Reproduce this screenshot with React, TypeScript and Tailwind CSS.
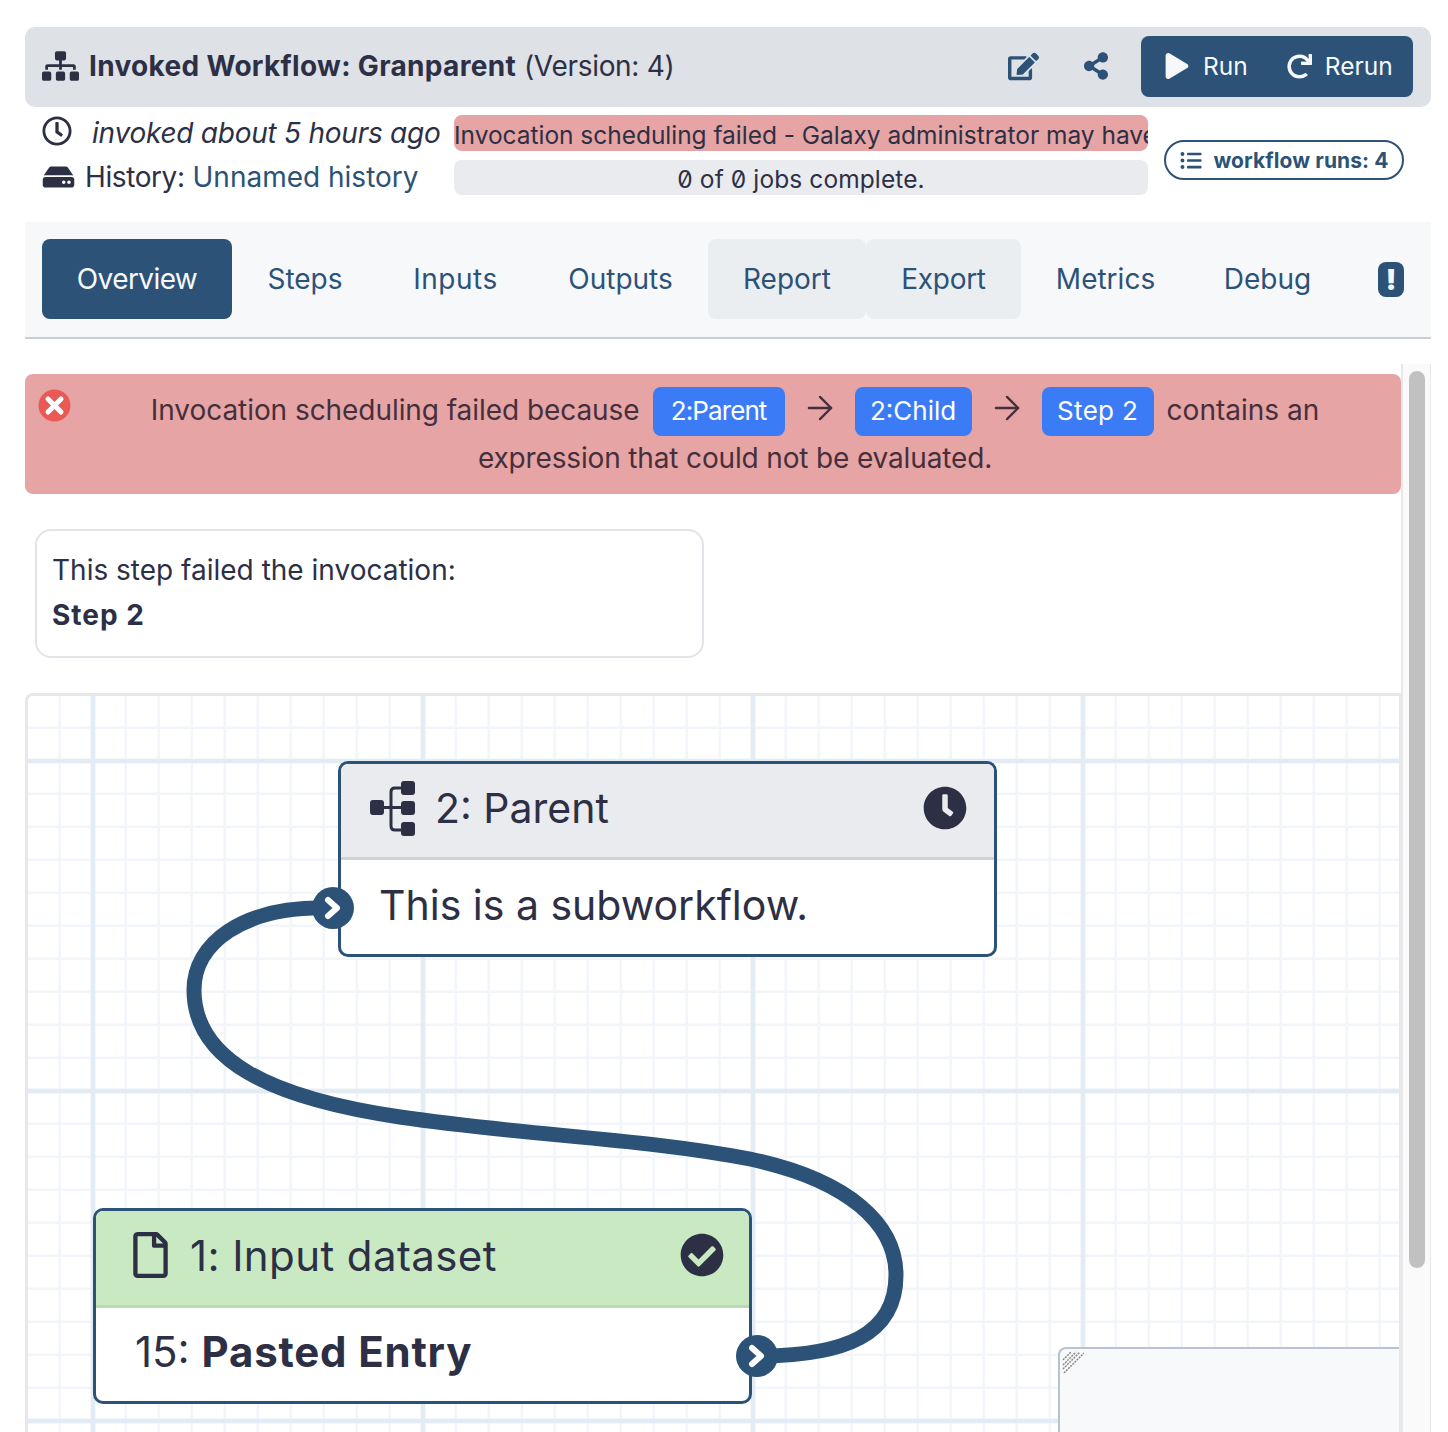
import React from 'react';
import { FaSitemap, FaRegClock, FaHdd, FaEdit, FaShareAlt, FaPlay, FaRedo, FaListUl, FaRegFile, FaClock, FaCheckCircle } from 'react-icons/fa';
import { ArrowRight } from 'lucide-react';

const font = "font-['Inter','Liberation_Sans',sans-serif]";

function Tab({ label, className }: { label: string; className: string }) {
  return <div className={`flex h-20 items-center justify-center rounded-lg text-[#2c5278] ${className}`}>{label}</div>;
}

function Badge({ label, className }: { label: string; className: string }) {
  return <span className={`mx-[13px] inline-flex h-[49px] items-center justify-center rounded-lg bg-[#3b7cf6] text-[26px] text-white ${className}`}>{label}</span>;
}

function Arrow() {
  return <ArrowRight className="mx-[3px] h-[38px] w-[38px] -translate-y-[3px] text-[#462f3c]" strokeWidth={1.5} />;
}

function Terminal({ className }: { className: string }) {
  return (
    <div className={`absolute flex h-[42px] w-[42px] items-center justify-center rounded-full bg-[#2c5278] ${className}`}>
      <svg width="22" height="26" viewBox="0 0 22 26" fill="none" stroke="#fff" strokeWidth="6" strokeLinecap="round" strokeLinejoin="round">
        <path d="M6 5 L15 13 L6 21" />
      </svg>
    </div>
  );
}

function SubworkflowIcon() {
  return (
    <svg width="46" height="56" viewBox="0 0 46 56" fill="#2d3045">
      <rect x="0" y="19" width="14" height="15" rx="3" />
      <rect x="31" y="0" width="14" height="14" rx="3" />
      <rect x="31" y="20" width="14" height="14" rx="3" />
      <rect x="31" y="41" width="14" height="14" rx="3" />
      <path d="M31 7 H25 Q21 7 21 11 V45 Q21 49 25 49 H31 M14 26.5 H31" fill="none" stroke="#2d3045" strokeWidth="3" />
    </svg>
  );
}

export default function App() {
  return (
    <div className={`h-[1432px] w-[1448px] overflow-hidden bg-white pl-[25px] pr-[17px] pt-[27px] text-[28px] text-[#2d3045] slashed-zero ${font}`}>
      {/* Header */}
      <div className="flex h-20 items-center justify-between rounded-[10px] bg-[#dee1e6] pb-[2px] pl-[17px] pr-[18px]">
        <div className="flex items-center gap-[10px]">
          <FaSitemap className="h-[30px] w-[37px]" />
          <span><b className="font-bold tracking-[0.32px]">Invoked Workflow: Granparent</b> <span className="tracking-[-0.3px]">(Version: 4)</span></span>
        </div>
        <div className="flex items-center text-[#2c5278]">
          <FaEdit className="mr-[45px] h-[29px] w-[31px]" />
          <FaShareAlt className="mr-[33px] h-[28px] w-[24px]" />
          <div className="flex h-[61px] w-[272px] items-center rounded-lg bg-[#2c5278] pl-6 text-[24.5px] text-[#f7f8fa]">
            <FaPlay className="mr-[14px] h-[26px] w-[24px]" />
            <span>Run</span>
            <FaRedo className="ml-[39px] mr-[13px] h-[27px] w-[25px]" />
            <span>Rerun</span>
          </div>
        </div>
      </div>

      {/* Meta */}
      <div className="mt-2 flex h-20 pl-[17px]">
        <div className="w-[412px]">
          <div className="flex h-9 items-center">
            <FaRegClock className="mr-[20px] h-[30px] w-[30px] -translate-y-[2px]" />
            <i className="tracking-[-0.25px]">invoked about 5 hours ago</i>
          </div>
          <div className="mt-[8px] flex h-9 items-center">
            <FaHdd className="mr-[10px] h-[28px] w-[33px]" />
            <span><span className="tracking-[-0.4px]">History:</span> <span className="text-[#2c5278]">Unnamed history</span></span>
          </div>
        </div>
        <div className="w-[694px] text-[24.5px]">
          <div className="h-9 overflow-hidden whitespace-nowrap rounded-lg bg-[#e6a4a4] leading-[40px] tracking-[-0.03px]">Invocation scheduling failed - Galaxy administrator may have</div>
          <div className="mt-[9px] flex h-[35px] items-center justify-center rounded-lg bg-[#e9ebef] pt-[3px] tracking-[0.1px]">0 of 0 jobs complete.</div>
        </div>
        <div className="ml-4 mt-[25px] flex h-10 w-[240px] items-center justify-center gap-[10px] rounded-full border-2 border-[#2c5278] pt-[1px] text-[21px] font-bold tracking-[0.1px] text-[#2c5278]">
          <FaListUl className="h-[21px] w-[24px]" />
          <span>workflow runs: 4</span>
        </div>
      </div>

      {/* Tabs */}
      <div className="mt-[27px] flex h-[117px] items-start border-b-2 border-[#c8ced6] bg-[#f7f8fa] pl-[17px] pt-[17px]">
        <div className="flex h-20 w-[190px] items-center justify-center rounded-lg bg-[#2c5278] tracking-[-0.6px] text-[#f7f8fa]">Overview</div>
        <Tab label="Steps" className="w-[146px]" />
        <Tab label="Inputs" className="w-[155px] tracking-[0.5px]" />
        <Tab label="Outputs" className="w-[175px]" />
        <Tab label="Report" className="w-[158px] bg-[#ebeef1]" />
        <Tab label="Export" className="w-[155px] bg-[#ebeef1] tracking-[-0.3px]" />
        <Tab label="Metrics" className="w-[169px]" />
        <Tab label="Debug" className="w-[155px]" />
        <div className="ml-[33px] mt-[23px] flex h-[35px] w-[26px] items-center justify-center rounded-lg bg-[#2c5278] text-[28px] font-black leading-none text-[#f7f8fa]">!</div>
      </div>

      {/* Scroll area */}
      <div className="mt-[25px] flex h-[1068px] overflow-hidden">
        <div className="w-[1376px] shrink-0">
          <div className="relative mt-[10px] h-[120px] rounded-lg bg-[#e6a4a4] pl-[100px] pr-[56px] pt-3 text-center leading-[48px] text-[#462f3c]">
            <svg className="absolute left-[13px] top-[15px] h-[33px] w-[33px]" viewBox="0 0 33 33">
              <circle cx="16.5" cy="16.5" r="16" fill="#ea5a55" />
              <path d="M10 10 L23 23 M23 10 L10 23" stroke="#fff" strokeWidth="5" strokeLinecap="round" />
            </svg>
            <div className="flex items-center justify-center">
              <span className="pb-[2px] tracking-[-0.06px]">Invocation scheduling failed because</span>
              <Badge label="2:Parent" className="w-[132px] tracking-[-0.9px]" />
              <Arrow />
              <Badge label="2:Child" className="w-[117px]" />
              <Arrow />
              <Badge label="Step 2" className="w-[112px] tracking-[0.3px]" />
              <span className="pb-[2px]">contains an</span>
            </div>
            <div className="-mt-[2px] tracking-[-0.15px]">expression that could not be evaluated.</div>
          </div>

          <div className="ml-[10px] mt-[35px] h-[129px] w-[669px] rounded-2xl border-2 border-[#e2e4e9] px-[15px] pt-[17px] leading-[45px]">
            <div>This step failed the invocation:</div>
            <b className="font-bold tracking-[1px]">Step 2</b>
          </div>

          {/* Canvas */}
          <div className="relative mt-[35px] h-[760px] overflow-hidden rounded-tl-lg border-l-[3px] border-r-2 border-t-[3px] border-[#e8e8ec] bg-white">
            <div className="absolute inset-0 bg-[linear-gradient(to_right,transparent,#e3ebf5_1.5px,#e3ebf5_4.5px,transparent_6px),linear-gradient(to_bottom,transparent,#e3ebf5_1.5px,#e3ebf5_4.5px,transparent_6px),linear-gradient(to_right,transparent,#f2f6fb_1px,#f2f6fb_2.5px,transparent_3.5px),linear-gradient(to_bottom,transparent,#f2f6fb_1px,#f2f6fb_2.5px,transparent_3.5px)] bg-[length:330px_330px,330px_330px,33px_33px,33px_33px] bg-[position:62px_0px,0px_62px,30px_0px,0px_30px] blur-[0.7px]" />

            <svg className="absolute inset-0 h-full w-full" viewBox="28 696 1371 760" preserveAspectRatio="xMinYMin slice" fill="none">
              <path
                d="M333 908 C240 905 194 945 194 990 C194 1060 270 1098 400 1117 C530 1136 640 1138 750 1159 C850 1180 896 1225 896 1275 C896 1335 845 1356 757 1356"
                stroke="#2c5278"
                strokeWidth="15"
              />
            </svg>

            {/* Node 2: Parent */}
            <div className="absolute left-[310px] top-[65px] h-[196px] w-[659px] rounded-[10px] border-[3px] border-[#2c5278] bg-white">
              <div className="flex h-[96px] items-center justify-between rounded-t-[7px] border-b-[3px] border-[#d0d2d8] bg-[#eaebef] pb-[3px] pl-[29px] pr-[27px]">
                <div className="flex items-center gap-[19px] text-[41px]">
                  <SubworkflowIcon />
                  <span>2: Parent</span>
                </div>
                <FaClock className="h-[44px] w-[44px] -translate-y-px" />
              </div>
              <div className="pl-[38px] pt-[18px] text-[41px] leading-[55px]">This is a subworkflow.</div>
              <Terminal className="-left-[29px] top-[123px]" />
            </div>

            {/* Node 1: Input dataset */}
            <div className="absolute left-[65px] top-[512px] h-[196px] w-[659px] rounded-[10px] border-[3px] border-[#2c5278] bg-white">
              <div className="flex h-[97px] items-center justify-between rounded-t-[7px] border-b-[3px] border-[#b9d9b4] bg-[#c9e9c3] pb-[6px] pl-[37px] pr-[25px]">
                <div className="flex items-center gap-[22px] text-[42px] tracking-[0.4px]">
                  <FaRegFile className="h-[46px] w-[35px]" />
                  <span>1: Input dataset</span>
                </div>
                <FaCheckCircle className="h-[44px] w-[44px]" />
              </div>
              <div className="pl-[39px] pt-4 text-[42px] leading-[55px]">15: <b className="font-bold tracking-[0.8px]">Pasted Entry</b></div>
              <Terminal className="-right-[29px] top-[124px]" />
            </div>

            {/* Minimap */}
            <div className="absolute left-[1030px] top-[651px] h-[120px] w-[345px] rounded-tl-lg border-l-2 border-t-2 border-[#b9c3d0] bg-[#f8f9fb]">
              <svg className="absolute left-[2px] top-[2px]" width="22" height="22" viewBox="0 0 22 22" stroke="#888" strokeWidth="1.5" strokeDasharray="2 1">
                <path d="M1 9 L9 1 M1 14 L14 1 M1 18 L18 1 M2 22 L22 2" />
              </svg>
            </div>
          </div>
        </div>

        {/* Scrollbar */}
        <div className="w-[30px] shrink-0 border-l-2 border-r border-[#e8e8e8] bg-[#fafafa] pl-[6px] pt-[7px]">
          <div className="h-[897px] w-4 rounded-full bg-[#c1c1c1]" />
        </div>
      </div>
    </div>
  );
}
